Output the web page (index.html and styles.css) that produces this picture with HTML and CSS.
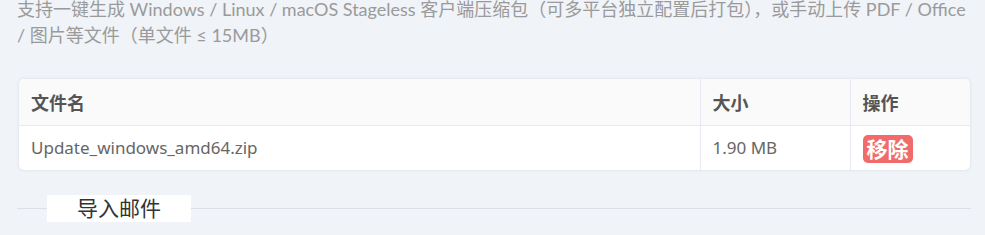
FILE: index.html
```html
<!DOCTYPE html>
<html lang="zh-CN">
<head>
    <meta charset="UTF-8">
    <meta name="viewport" content="width=device-width, initial-scale=1.0">
    <title>上传文件</title>
    <link rel="stylesheet" href="styles.css">
</head>
<body>
    <div class="wrap">
        <p class="tip">支持一键生成 Windows / Linux / macOS Stageless 客户端压缩包（可多平台独立配置后打包），或手动上传 PDF / Office / 图片等文件（单文件 ≤ 15MB）</p>
        <div class="file-box">
            <table class="file-table">
                <thead>
                    <tr>
                        <th class="col-name">文件名</th>
                        <th class="col-size">大小</th>
                        <th class="col-op">操作</th>
                    </tr>
                </thead>
                <tbody>
                    <tr>
                        <td>Update_windows_amd64.zip</td>
                        <td>1.90 MB</td>
                        <td><span class="btn-remove">移除</span></td>
                    </tr>
                </tbody>
            </table>
        </div>
        <div class="divider">
            <span class="line short"></span>
            <span class="divider-text">导入邮件</span>
            <span class="line"></span>
        </div>
    </div>
</body>
</html>
```

FILE: styles.css
```css
* {
    margin: 0;
    padding: 0;
    box-sizing: border-box;
}

body {
    background: #f0f3f8;
    font-family: "Noto Sans", "Noto Sans CJK SC", sans-serif;
    overflow: hidden;
}

.wrap {
    padding: 0 14px 0 17px;
}

.tip {
    margin-top: -4px;
    font-family: Lato, "Noto Sans CJK SC", sans-serif;
    font-size: 18px;
    line-height: 26px;
    color: #9a9a9a;
}

.file-box {
    margin: 31px 1px 0 2px;
    background: #fff;
    border-radius: 5px;
    box-shadow: 0 0 3px rgba(180, 190, 210, 0.45);
    overflow: hidden;
}

.file-table {
    width: 100%;
    border-collapse: collapse;
    table-layout: fixed;
}

.file-table th,
.file-table td {
    text-align: left;
    padding: 0 12px;
    border-left: 1px solid #e6eaf2;
}

.file-table th:first-child,
.file-table td:first-child {
    border-left: none;
}

.file-table th {
    height: 46px;
    background: #fafafa;
    font-size: 18px;
    font-weight: bold;
    color: #555;
    border-bottom: 1px solid #e6eaf2;
}

.file-table td {
    height: 45px;
    font-size: 17px;
    color: #666;
}

.col-size {
    width: 150px;
}

.col-op {
    width: 120px;
}

.btn-remove {
    display: inline-block;
    margin-top: 3px;
    padding: 0 4px;
    height: 28px;
    line-height: 28px;
    border-radius: 5px;
    background: #f26b6b;
    color: #fff;
    font-size: 21px;
    font-weight: bold;
}

.divider {
    display: flex;
    align-items: center;
    margin-top: 25px;
}

.divider .line {
    flex: 1;
    height: 1px;
    background: #dcdfe6;
}

.divider .line.short {
    flex: 0 0 30px;
}

.divider-text {
    background: #fff;
    padding: 0 30px;
    height: 27px;
    line-height: 27px;
    font-size: 21px;
    color: #333;
}
```
